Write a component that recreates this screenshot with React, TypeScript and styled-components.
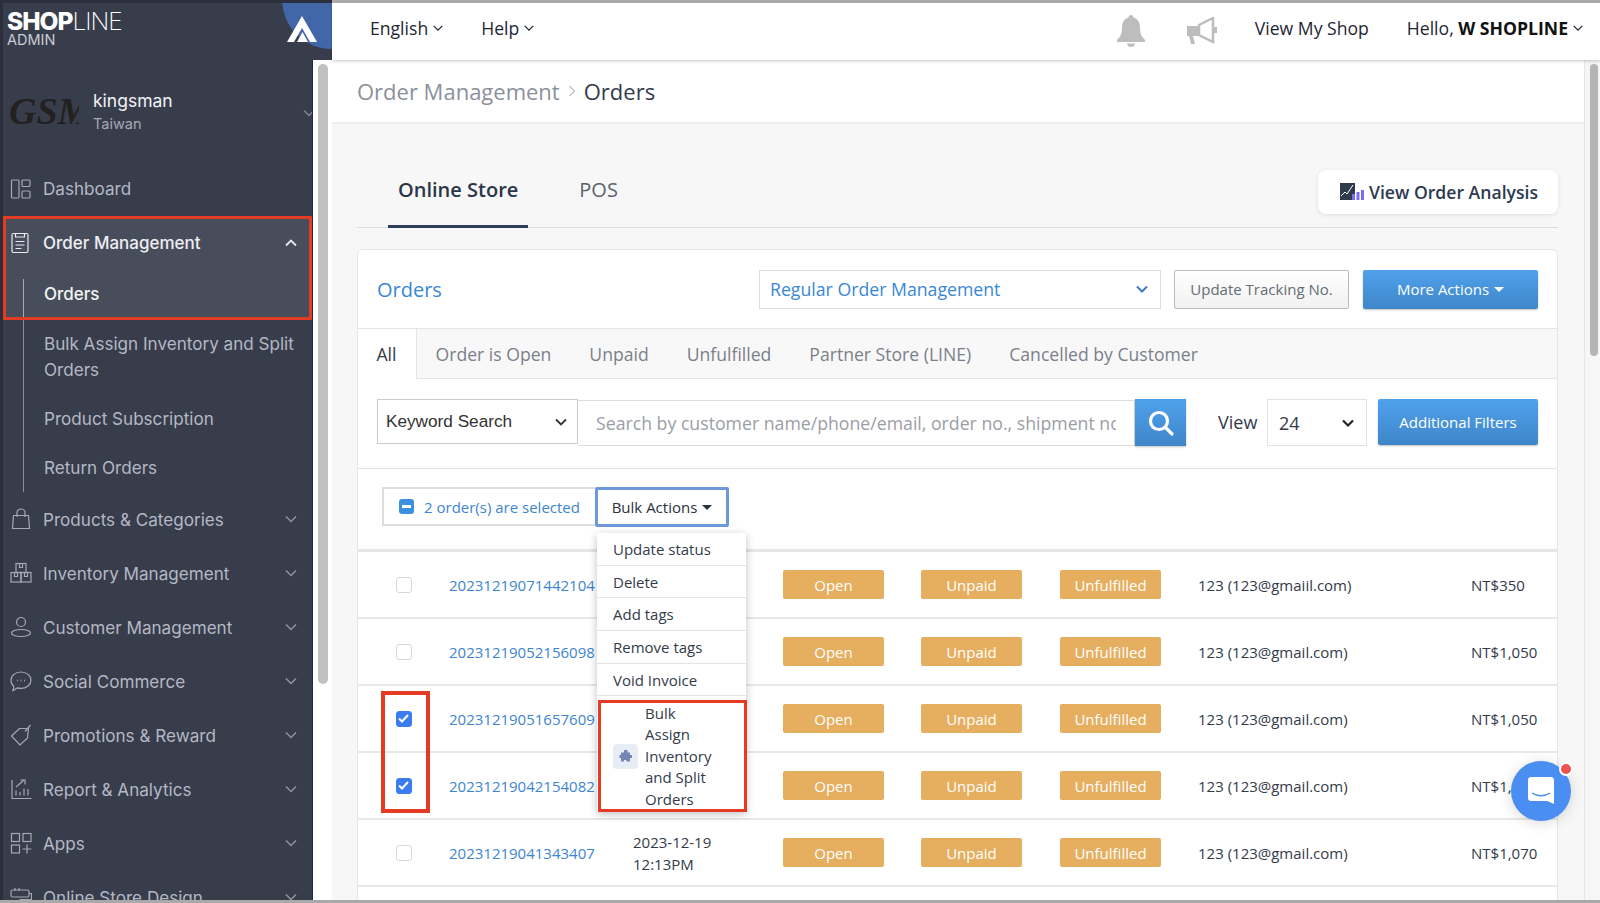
import React from 'react';
import styled, { createGlobalStyle } from 'styled-components';

const GlobalStyle = createGlobalStyle`
  html, body { margin: 0; padding: 0; background: #fff; overflow: hidden; }
  * { box-sizing: border-box; }
  body { font-family: "Open Sans", "Liberation Sans", sans-serif; color: #333b4a; }
`;

const chevronPaths = {
  down: 'M2 4.5l5 5 5-5',
  up: 'M2 9.5 7 4.5l5 5',
  right: 'M4.500 2l5 5-5 5',
};

const Chevron: React.FC<{ dir?: keyof typeof chevronPaths; size?: number; weight?: number }> = ({
  dir = 'down',
  size = 14,
  weight = 1.5,
}) => (
  <svg width={size} height={size} viewBox="0 0 14 14" fill="none" stroke="currentColor" strokeWidth={weight}>
    <path d={chevronPaths[dir]} />
  </svg>
);

const Caret = () => (
  <svg width="10" height="5" viewBox="0 0 10 5" fill="currentColor">
    <path d="M0 0h10L5 5z" />
  </svg>
);

const icon = (body: React.ReactNode) => (
  <svg width="22" height="22" viewBox="0 0 22 22" fill="none" stroke="currentColor" strokeWidth="1.2">
    {body}
  </svg>
);

const icons = {
  dashboard: icon(
    <>
      <rect x="1.5" y="2" width="7.5" height="18" rx="1" />
      <rect x="12" y="2" width="8" height="6.5" rx="1" />
      <rect x="12" y="13" width="8" height="7" rx="1" />
    </>,
  ),
  orders: icon(
    <>
      <rect x="2" y="1.5" width="16" height="19" rx="1.5" />
      <path d="M5.500 1.500v3.500h9V1.500M5.500 9.500h9M5.500 13h9M5.500 16.500h6" />
    </>,
  ),
  bag: icon(
    <>
      <path d="M3.500 7.500h15l1 13h-17z" />
      <path d="M7 9V4.500C7 2.500 9 1 11 1s4 1.500 4 3.500V9" />
    </>,
  ),
  boxes: icon(
    <>
      <rect x="6" y="1.500" width="10" height="9" />
      <rect x="1" y="10.500" width="10" height="9.500" />
      <rect x="11" y="10.500" width="10" height="9.500" />
      <path d="M9.500 1.500v4h3v-4M4.500 10.500v4h3v-4M14.500 10.500v4h3v-4" />
    </>,
  ),
  person: icon(
    <>
      <circle cx="11" cy="6" r="4.500" />
      <ellipse cx="11" cy="17" rx="9.500" ry="3.500" />
    </>,
  ),
  chat: icon(
    <>
      <path d="M11 2c5.500 0 10 3.600 10 8.200s-4.500 8.200-10 8.200c-1.300 0-2.500-.2-3.600-.5L3 20.500l.8-4.200C2 14.800 1 12.600 1 10.200 1 5.600 5.500 2 11 2z" />
      <path d="M7 10.500h1M10.500 10.500h1M14 10.500h1" strokeWidth="1.600" />
    </>,
  ),
  tag: icon(
    <>
      <path d="M1.500 12 9.500 4.500h9l-1 9.500-7.500 7z" />
      <path d="M15 7.500 20.500 1" />
    </>,
  ),
  chart: icon(
    <>
      <path d="M2 2v18.500h19.500" />
      <path d="M6 17.500v-5M10 17.500V14M14 17.500v-7M18 17.500V11" />
      <path d="M6 9l8-7M10.500 2H15v4.500" />
    </>,
  ),
  apps: icon(
    <>
      <rect x="1.500" y="1.500" width="8" height="8" />
      <rect x="13" y="1.500" width="8" height="8" />
      <rect x="1.500" y="13" width="8" height="8" />
      <path d="M17 12.500v9M12.500 17h9" />
    </>,
  ),
  roller: icon(
    <>
      <rect x="1" y="4" width="18" height="7" rx="1.500" />
      <path d="M19 7.500h2.500v6H10v3M5 2v3M9 2v3" />
      <rect x="7" y="16" width="6" height="6" />
    </>,
  ),
};

const navAfter = [
  { label: 'Products & Categories', icon: icons.bag },
  { label: 'Inventory Management', icon: icons.boxes },
  { label: 'Customer Management', icon: icons.person },
  { label: 'Social Commerce', icon: icons.chat },
  { label: 'Promotions & Reward', icon: icons.tag },
  { label: 'Report & Analytics', icon: icons.chart },
  { label: 'Apps', icon: icons.apps },
  { label: 'Online Store Design', icon: icons.roller },
];

const orders = [
  { no: '20231219071442104', email: '123 (123@gmaiil.com)', total: 'NT$350', checked: false },
  { no: '20231219052156098', email: '123 (123@gmail.com)', total: 'NT$1,050', checked: false },
  { no: '20231219051657609', email: '123 (123@gmail.com)', total: 'NT$1,050', checked: true },
  { no: '20231219042154082', email: '123 (123@gmail.com)', total: 'NT$1,050', checked: true },
  { no: '20231219041343407', email: '123 (123@gmail.com)', total: 'NT$1,070', checked: false },
  { no: '20231219035512266', email: '123 (123@gmail.com)', total: 'NT$1,070', checked: false },
];

const App: React.FC = () => (
  <S.Frame>
    <GlobalStyle />
    <S.LeftColumn>
      <S.Brand>
        <S.Logo>
          <S.LogoWord>
            <b>SHOP</b>LINE
          </S.LogoWord>
          <S.LogoSub>ADMIN</S.LogoSub>
        </S.Logo>
        <S.BrandCircle />
        <S.BrandMark width="30" height="26" viewBox="0 0 30 26" fill="#fff">
          <path d="M15 0 30 26h-7L15 12 7 26H0z" />
          <path d="M15.500 16 21 26H10z" />
        </S.BrandMark>
      </S.Brand>
      <S.LeftBody>
        <S.Nav>
          <S.Account>
            <S.StoreLogo>
              <span>GSM</span>
            </S.StoreLogo>
            <S.AccountText>
              <S.StoreName>kingsman</S.StoreName>
              <S.StoreRegion>Taiwan</S.StoreRegion>
            </S.AccountText>
            <S.AccountChevron>
              <Chevron />
            </S.AccountChevron>
          </S.Account>
          <S.DashboardRow>
            <S.NavIcon>{icons.dashboard}</S.NavIcon>
            Dashboard
          </S.DashboardRow>
          <S.ActiveGroup>
            <S.ActiveRow>
              <S.NavIcon>{icons.orders}</S.NavIcon>
              Order Management
              <S.RowChevron>
                <Chevron dir="up" weight={1.8} />
              </S.RowChevron>
            </S.ActiveRow>
            <S.ActiveSub>Orders</S.ActiveSub>
          </S.ActiveGroup>
          <S.SubList>
            <S.SubItem>Bulk Assign Inventory and Split Orders</S.SubItem>
            <S.SubItem>Product Subscription</S.SubItem>
            <S.SubItem>Return Orders</S.SubItem>
          </S.SubList>
          {navAfter.map((item) => (
            <S.NavRow key={item.label}>
              <S.NavIcon>{item.icon}</S.NavIcon>
              {item.label}
              <S.RowChevron>
                <Chevron />
              </S.RowChevron>
            </S.NavRow>
          ))}
        </S.Nav>
        <S.Gutter>
          <S.LeftThumb />
        </S.Gutter>
      </S.LeftBody>
    </S.LeftColumn>

    <S.RightColumn>
      <S.TopBar>
        <S.TopLink>
          English <Chevron size={12} />
        </S.TopLink>
        <S.TopLink>
          Help <Chevron size={12} />
        </S.TopLink>
        <S.TopSpacer />
        <S.BellIcon width="30" height="32" viewBox="0 0 30 32" fill="#bdbdbd">
          <path d="M15 0c1.500 0 2.500 1 2.500 2.500C22.500 4 24 8 24 13c0 6 2 9 5 12 .5.800 0 2-1 2H2c-1 0-1.500-1.200-1-2 3-3 5-6 5-12 0-5 1.500-9 6.500-10.500C12.500 1 13.500 0 15 0z" />
          <path d="M11 28.500h8c0 2-1.800 3.500-4 3.500s-4-1.500-4-3.500z" />
        </S.BellIcon>
        <S.HornIcon width="32" height="28" viewBox="0 0 32 28" fill="#bdbdbd">
          <path d="M1 9h11v10H7l2 8H5l-2-8H1z" />
          <path d="M13 8 27 1v24l-14-7z" fill="none" stroke="#bdbdbd" strokeWidth="2.500" />
          <path d="M28 10h3v6h-3z" />
        </S.HornIcon>
        <S.ShopLink>View My Shop</S.ShopLink>
        <S.TopLink>
          <span>
            Hello, <b>W SHOPLINE</b>
          </span>
          <Chevron size={12} />
        </S.TopLink>
      </S.TopBar>
      <S.RightBody>
        <S.Page>
          <S.Breadcrumb>
            <span>Order Management</span>
            <S.CrumbArrow>
              <Chevron dir="right" size={14} weight={1} />
            </S.CrumbArrow>
            <S.CrumbCurrent>Orders</S.CrumbCurrent>
          </S.Breadcrumb>
          <S.Content>
            <S.StoreTabs>
              <S.StoreTab $active>Online Store</S.StoreTab>
              <S.StoreTab>POS</S.StoreTab>
              <S.AnalysisButton>
                <svg width="24" height="18" viewBox="0 0 24 18">
                  <rect x="0" y="0" width="15" height="17" fill="#2f3b4a" />
                  <path d="M1 13l4-4 2 2 6-9" fill="none" stroke="#fff" strokeWidth="1" />
                  <path d="M12 11h3v6h-3zM16.500 9h3v8h-3zM21 7h3v10h-3z" fill="#7b6cf6" />
                </svg>
                View Order Analysis
              </S.AnalysisButton>
            </S.StoreTabs>

            <S.Card>
              <S.CardHeader>
                <S.CardTitle>Orders</S.CardTitle>
                <S.ModeSelect>
                  Regular Order Management
                  <Chevron size={14} weight={2} />
                </S.ModeSelect>
                <S.GhostButton>Update Tracking No.</S.GhostButton>
                <S.BlueButton $width={175}>
                  More Actions <Caret />
                </S.BlueButton>
              </S.CardHeader>

              <S.FilterTabs>
                <S.FilterTab $active>All</S.FilterTab>
                <S.FilterTab>Order is Open</S.FilterTab>
                <S.FilterTab>Unpaid</S.FilterTab>
                <S.FilterTab>Unfulfilled</S.FilterTab>
                <S.FilterTab>Partner Store (LINE)</S.FilterTab>
                <S.FilterTab>Cancelled by Customer</S.FilterTab>
              </S.FilterTabs>

              <S.SearchRow>
                <S.KeywordSelect>
                  Keyword Search
                  <Chevron size={14} weight={1.8} />
                </S.KeywordSelect>
                <S.SearchInput>
                  <S.Placeholder>Search by customer name/phone/email, order no., shipment no.</S.Placeholder>
                </S.SearchInput>
                <S.SearchButton>
                  <svg width="28" height="28" viewBox="0 0 28 28" fill="none" stroke="#fff" strokeWidth="3.200">
                    <circle cx="12" cy="12" r="8.500" />
                    <path d="M18.500 18.500 25 25" strokeLinecap="round" />
                  </svg>
                </S.SearchButton>
                <S.ViewLabel>View</S.ViewLabel>
                <S.ViewSelect>
                  24
                  <Chevron size={14} weight={2.2} />
                </S.ViewSelect>
                <S.BlueButton $width={160} $height={46}>
                  Additional Filters
                </S.BlueButton>
              </S.SearchRow>

              <S.BulkRow>
                <S.SelectedBox>
                  <S.MinusBox />
                  2 order(s) are selected
                </S.SelectedBox>
                <S.BulkButton>
                  Bulk Actions <Caret />
                </S.BulkButton>
                <S.Menu>
                  <S.MenuItem>Update status</S.MenuItem>
                  <S.MenuItem>Delete</S.MenuItem>
                  <S.MenuItem>Add tags</S.MenuItem>
                  <S.MenuItem>Remove tags</S.MenuItem>
                  <S.MenuItem>Void Invoice</S.MenuItem>
                  <S.MenuApp>
                    <S.AppIcon>
                      <svg width="14" height="14" viewBox="0 0 14 14" fill="#7487b4">
                        <path d="M5 1h3.500v2.500H11V6h2v3h-2v3.500H7.500V11H5v1.500H2V9H.5V6H2V3.500h3z" />
                      </svg>
                    </S.AppIcon>
                    <S.AppText>Bulk Assign Inventory and Split Orders</S.AppText>
                  </S.MenuApp>
                </S.Menu>
              </S.BulkRow>

              <S.Table>
                {orders.map((order) => (
                  <S.Row key={order.no}>
                    <S.CheckCell>
                      <S.Check $checked={order.checked}>
                        {order.checked && (
                          <svg width="11" height="9" viewBox="0 0 11 9" fill="none" stroke="#fff" strokeWidth="2">
                            <path d="M1 4.500 4 7.500 10 1" />
                          </svg>
                        )}
                      </S.Check>
                    </S.CheckCell>
                    <S.OrderNo>{order.no}</S.OrderNo>
                    <S.DateCell>
                      2023-12-19
                      <br />
                      12:13PM
                    </S.DateCell>
                    <S.Badge>Open</S.Badge>
                    <S.Badge>Unpaid</S.Badge>
                    <S.Badge>Unfulfilled</S.Badge>
                    <S.Customer>{order.email}</S.Customer>
                    <span>{order.total}</span>
                  </S.Row>
                ))}
                <S.CheckHighlight />
              </S.Table>
            </S.Card>
          </S.Content>
        </S.Page>
        <S.RightGutter>
          <S.RightThumb />
        </S.RightGutter>
      </S.RightBody>
    </S.RightColumn>

    <S.ChatBubble>
      <svg width="28" height="30" viewBox="0 0 28 30">
        <path d="M4 1h20c1.700 0 3 1.300 3 3v24l-7-3H4c-1.700 0-3-1.300-3-3V4c0-1.700 1.300-3 3-3z" fill="#fff" />
        <path d="M5 17c5 3.500 13 3.500 18 0" fill="none" stroke="#4b8ef1" strokeWidth="1.500" />
      </svg>
      <S.ChatDot />
    </S.ChatBubble>
  </S.Frame>
);

export default App;

const S = {
  Frame: styled.div`
    position: relative;
    display: flex;
    width: 1600px;
    height: 903px;
    overflow: hidden;
    border-bottom: 3px solid #a9a9a9;
  `,

  LeftColumn: styled.div`
    display: flex;
    flex-direction: column;
    flex: 0 0 332px;
    height: 100%;
  `,

  Brand: styled.div`
    position: relative;
    flex: 0 0 60px;
    overflow: hidden;
    background: #383d4c;
    border-top: 3px solid #2b2f3b;
    border-left: 3px solid #2b2f3b;
  `,

  Logo: styled.div`
    padding: 6px 0 0 4px;
    color: #fff;
  `,

  LogoWord: styled.div`
    font-family: 'Inter', sans-serif;
    font-size: 24.500px;
    font-weight: 200;
    line-height: 24px;
    letter-spacing: -1px;
    b {
      font-weight: 800;
    }
  `,

  LogoSub: styled.div`
    font-family: 'Inter', sans-serif;
    font-size: 14.500px;
    line-height: 14px;
    color: #c9ccd4;
  `,

  BrandCircle: styled.div`
    position: absolute;
    left: 279px;
    top: -54px;
    width: 100px;
    height: 100px;
    border-radius: 50%;
    background: #4267a9;
  `,

  BrandMark: styled.svg`
    position: absolute;
    left: 284px;
    top: 13px;
  `,

  LeftBody: styled.div`
    display: flex;
    flex: 1;
    min-height: 0;
  `,

  Nav: styled.nav`
    flex: 0 0 313px;
    overflow: hidden;
    background: #383d4c;
    border-left: 3px solid #2b2f3b;
    border-right: 1px solid #1f2a44;
    font-family: 'Inter', 'Liberation Sans', sans-serif;
    font-size: 17.100px;
    color: #b4b8c4;
  `,

  Account: styled.div`
    position: relative;
    display: flex;
    align-items: center;
    height: 101px;
    padding: 0 0 0 6px;
  `,

  StoreLogo: styled.div`
    width: 70px;
    height: 34px;
    overflow: hidden;
    font-family: 'Liberation Serif', serif;
    font-style: italic;
    font-weight: 700;
    font-size: 38px;
    line-height: 34px;
    white-space: nowrap;
    color: #22211f;
  `,

  AccountText: styled.div`
    margin-left: 14px;
    padding-top: 2px;
  `,

  StoreName: styled.div`
    font-size: 17.500px;
    line-height: 24px;
    color: #f2f3f5;
  `,

  StoreRegion: styled.div`
    font-size: 14.500px;
    line-height: 22px;
    color: #a4a8b4;
  `,

  AccountChevron: styled.span`
    position: absolute;
    right: -4px;
    top: 43px;
    color: #7e8390;
  `,

  NavRow: styled.div`
    display: flex;
    align-items: center;
    height: 54px;
    padding: 0 14px 0 7px;
    white-space: nowrap;
  `,

  DashboardRow: styled.div`
    display: flex;
    align-items: center;
    height: 55px;
    padding: 0 14px 0 7px;
    white-space: nowrap;
  `,

  NavIcon: styled.span`
    display: flex;
    width: 22px;
    margin-right: 11px;
    color: #a5a9b5;
  `,

  RowChevron: styled.span`
    display: flex;
    margin-left: auto;
    color: #8f94a1;
  `,

  ActiveGroup: styled.div`
    height: 104px;
    background: #484d5b;
    border: 3px solid #e43c24;
    color: #edeef2;
    font-size: 17px;
    font-weight: 500;
  `,

  ActiveRow: styled.div`
    display: flex;
    align-items: center;
    height: 47px;
    padding: 0 11px 0 4px;
    white-space: nowrap;
    span {
      color: #e8e9ee;
    }
  `,

  ActiveSub: styled.div`
    height: 38px;
    margin: 13px 0 0 17px;
    padding: 3px 0 0 20px;
    line-height: 24px;
    border-left: 1px solid #a6a9b3;
    color: #f2f3f5;
  `,

  SubList: styled.div`
    height: 172px;
    margin-left: 20px;
    padding-top: 11px;
    border-left: 1px solid #8a8e9a;
  `,

  SubItem: styled.div`
    width: 268px;
    margin: 0 0 23px 20px;
    line-height: 26px;
  `,

  Gutter: styled.div`
    flex: 1;
    padding: 4px 4px 0 5px;
    background: #fff;
  `,

  LeftThumb: styled.div`
    height: 620px;
    border-radius: 5px;
    background: #c1c1c1;
  `,

  RightColumn: styled.div`
    display: flex;
    flex-direction: column;
    flex: 1;
    min-width: 0;
    height: 100%;
  `,

  TopBar: styled.header`
    position: relative;
    z-index: 2;
    display: flex;
    flex: 0 0 60px;
    align-items: center;
    padding: 0 16px 8px 38px;
    background: #fff;
    border-top: 3px solid #a9a9a9;
    box-shadow: 0 1px 3px rgba(0, 0, 0, 0.22);
    font-size: 17.600px;
    color: #1f2633;
  `,

  TopLink: styled.div`
    display: flex;
    align-items: center;
    gap: 4px;
    margin-right: 37px;
    white-space: nowrap;
    &:last-child {
      margin-right: 0;
    }
    b {
      font-weight: 700;
      color: #111;
    }
  `,

  TopSpacer: styled.div`
    flex: 1;
  `,

  BellIcon: styled.svg`
    margin: 6px 40px 0 0;
  `,

  HornIcon: styled.svg`
    margin: 6px 37px 0 0;
  `,

  ShopLink: styled.div`
    margin-right: 38px;
  `,

  RightBody: styled.div`
    display: flex;
    flex: 1;
    min-height: 0;
  `,

  Page: styled.main`
    flex: 1;
    min-width: 0;
    overflow: hidden;
    background: #f7f7f7;
  `,

  Breadcrumb: styled.div`
    display: flex;
    align-items: center;
    height: 64px;
    padding-left: 25px;
    background: #fff;
    border-bottom: 2px solid #eee;
    font-size: 22px;
    color: #8b909a;
  `,

  CrumbArrow: styled.span`
    display: flex;
    margin: 0 5px 0 5px;
  `,

  CrumbCurrent: styled.span`
    color: #333b4a;
  `,

  Content: styled.div`
    padding: 0 26px 0 25px;
  `,

  StoreTabs: styled.div`
    display: flex;
    align-items: flex-end;
    height: 104px;
    border-bottom: 1px solid #ddd;
  `,

  StoreTab: styled.div<{ $active?: boolean }>`
    display: flex;
    align-items: center;
    justify-content: center;
    height: 60px;
    margin: 0 ${(p) => (p.$active ? '41px' : '0')} -1px ${(p) => (p.$active ? '31px' : '0')};
    padding: 0 10px 14px;
    border-bottom: 3px solid ${(p) => (p.$active ? '#2f3e5a' : 'transparent')};
    font-size: 20px;
    font-weight: ${(p) => (p.$active ? 600 : 400)};
    color: ${(p) => (p.$active ? '#2b3648' : '#5c6370')};
  `,

  AnalysisButton: styled.div`
    display: flex;
    align-items: center;
    gap: 5px;
    height: 44px;
    margin: 0 0 13px auto;
    padding: 0 20px 0 22px;
    border-radius: 8px;
    background: #fff;
    box-shadow: 0 1px 4px rgba(0, 0, 0, 0.1);
    font-size: 17.600px;
    font-weight: 600;
    color: #2d3a50;
  `,

  Card: styled.section`
    margin-top: 21px;
    background: #fff;
    border: 1px solid #e6e6e6;
    border-radius: 6px 6px 0 0;
  `,

  CardHeader: styled.div`
    display: flex;
    align-items: center;
    height: 78px;
    padding: 0 19px;
  `,

  CardTitle: styled.div`
    font-size: 20px;
    color: #3a87d5;
  `,

  ModeSelect: styled.div`
    display: flex;
    align-items: center;
    justify-content: space-between;
    width: 402px;
    height: 39px;
    margin-left: auto;
    padding: 0 11px 0 10px;
    border: 1px solid #ddd;
    font-size: 17.700px;
    color: #3a87d5;
    svg {
      color: #3f77c4;
    }
  `,

  GhostButton: styled.div`
    display: flex;
    align-items: center;
    justify-content: center;
    width: 175px;
    height: 39px;
    margin: 0 14px 0 13px;
    border: 1px solid #bbb;
    border-radius: 2px;
    background: linear-gradient(#fff, #f1f1f1);
    font-size: 15px;
    color: #666c75;
  `,

  BlueButton: styled.div<{ $width: number; $height?: number }>`
    display: flex;
    align-items: center;
    justify-content: center;
    gap: 5px;
    flex: 0 0 ${(p) => p.$width}px;
    height: ${(p) => p.$height ?? 39}px;
    border-radius: 2px;
    background: linear-gradient(#4fa1ec, #3f86c9);
    box-shadow: 0 1px 2px rgba(0, 0, 0, 0.25);
    font-size: 15px;
    color: #fff;
  `,

  FilterTabs: styled.div`
    display: flex;
    height: 51px;
    background: #f8f8f8;
    border-top: 1px solid #e5e5e5;
    border-bottom: 1px solid #e5e5e5;
  `,

  FilterTab: styled.div<{ $active?: boolean }>`
    display: flex;
    align-items: center;
    height: ${(p) => (p.$active ? '50px' : '49px')};
    padding: 0 19px 0 ${(p) => (p.$active ? '18.500px' : '19px')};
    background: ${(p) => (p.$active ? '#fff' : 'transparent')};
    border-right: ${(p) => (p.$active ? '1px solid #e5e5e5' : '0')};
    font-size: 17.600px;
    color: ${(p) => (p.$active ? '#333b4a' : '#7b808a')};
  `,

  SearchRow: styled.div`
    display: flex;
    align-items: flex-start;
    height: 90px;
    padding: 20px 19px 0 19px;
    border-bottom: 1px solid #e3e3e3;
  `,

  KeywordSelect: styled.div`
    display: flex;
    align-items: center;
    justify-content: space-between;
    flex: 0 0 201px;
    height: 45px;
    padding: 0 9px 0 8px;
    border: 1px solid #ccc;
    font-family: 'Liberation Sans', sans-serif;
    font-size: 17.200px;
    color: #333;
  `,

  SearchInput: styled.div`
    display: flex;
    align-items: center;
    flex: 0 0 557px;
    min-width: 0;
    height: 46px;
    margin-top: 1px;
    padding: 0 18px;
    border: 1px solid #ddd;
    border-left: 0;
    font-size: 17.700px;
    color: #9a9ea6;
  `,

  Placeholder: styled.span`
    min-width: 0;
    overflow: hidden;
    white-space: nowrap;
  `,

  SearchButton: styled.div`
    display: flex;
    align-items: center;
    justify-content: center;
    flex: 0 0 51px;
    height: 47px;
    background: linear-gradient(#4fa1ec, #3f86c9);
    box-shadow: 0 1px 2px rgba(0, 0, 0, 0.25);
  `,

  ViewLabel: styled.div`
    flex: 0 0 49px;
    margin-left: 32px;
    line-height: 47px;
    font-size: 18px;
  `,

  ViewSelect: styled.div`
    display: flex;
    align-items: center;
    justify-content: space-between;
    flex: 0 0 100px;
    height: 47px;
    margin-right: 11px;
    padding: 0 11px;
    border: 1px solid #e2e2e2;
    font-size: 18px;
    svg {
      color: #222;
    }
  `,

  BulkRow: styled.div`
    position: relative;
    display: flex;
    height: 83px;
    padding: 18px 0 0 24px;
    border-bottom: 3px solid #e6e6e6;
  `,

  SelectedBox: styled.div`
    display: flex;
    align-items: center;
    width: 213px;
    height: 39px;
    padding-left: 15px;
    border: 2px solid #ddd;
    border-right: 0;
    font-size: 15px;
    color: #3d85cf;
  `,

  MinusBox: styled.span`
    position: relative;
    width: 15px;
    height: 15px;
    margin-right: 10px;
    border-radius: 3px;
    background: #3d8fe0;
    &::after {
      content: '';
      position: absolute;
      left: 3px;
      right: 3px;
      top: 6px;
      height: 3px;
      background: #fff;
    }
  `,

  BulkButton: styled.div`
    display: flex;
    align-items: center;
    justify-content: center;
    gap: 5px;
    width: 134px;
    height: 40px;
    border: 3px solid #6e98dc;
    border-radius: 2px;
    font-size: 15px;
    color: #2a3140;
  `,

  Menu: styled.div`
    position: absolute;
    z-index: 3;
    left: 239px;
    top: 64px;
    width: 149px;
    background: #fff;
    box-shadow: 0 2px 8px rgba(0, 0, 0, 0.25);
    font-size: 15px;
    color: #333b4a;
  `,

  MenuItem: styled.div`
    display: flex;
    align-items: center;
    height: 32.700px;
    padding-left: 16px;
    border-bottom: 1px solid #e4e4e4;
  `,

  MenuApp: styled.div`
    display: flex;
    align-items: center;
    height: 112px;
    margin: 4px -1px 0 1px;
    padding-left: 12px;
    border: 3px solid #e43c24;
    line-height: 21.400px;
  `,

  AppIcon: styled.span`
    display: flex;
    align-items: center;
    justify-content: center;
    flex: 0 0 25px;
    height: 25px;
    margin-right: 7px;
    border-radius: 4px;
    background: #e8ecf5;
  `,

  AppText: styled.span`
    width: 76px;
  `,

  Table: styled.div`
    position: relative;
  `,

  Row: styled.div`
    display: grid;
    grid-template-columns: 91px 184px 150px 138px 139px 138px 273px 1fr;
    align-items: center;
    height: 67px;
    border-bottom: 2px solid #e8e8e8;
    font-size: 15px;
    color: #333b4a;
  `,

  CheckCell: styled.div`
    display: flex;
    justify-content: center;
  `,

  Check: styled.span<{ $checked: boolean }>`
    display: flex;
    align-items: center;
    justify-content: center;
    width: 16px;
    height: 16px;
    border: 1px solid ${(p) => (p.$checked ? '#3b7cf0' : '#d8d8d8')};
    border-radius: 3px;
    background: ${(p) => (p.$checked ? '#3b7cf0' : '#fff')};
  `,

  OrderNo: styled.span`
    color: #3d85cf;
  `,

  DateCell: styled.span`
    line-height: 22px;
  `,

  Badge: styled.span`
    display: flex;
    align-items: center;
    justify-content: center;
    width: 101px;
    height: 29px;
    border-radius: 2px;
    background: #e6ae5f;
    color: #fff;
  `,

  Customer: styled.span`
    white-space: nowrap;
  `,

  CheckHighlight: styled.div`
    position: absolute;
    left: 23px;
    top: 139px;
    width: 49px;
    height: 122px;
    border: 4px solid #e43c24;
    pointer-events: none;
  `,

  RightGutter: styled.div`
    flex: 0 0 16px;
    padding: 4px 2px 0 5px;
    background: #f6f6f6;
    border-left: 1px solid #e6e6e6;
  `,

  RightThumb: styled.div`
    height: 292px;
    border-radius: 5px;
    background: #b5b5b5;
  `,

  ChatBubble: styled.div`
    position: absolute;
    z-index: 5;
    left: 1511px;
    top: 761px;
    display: flex;
    align-items: center;
    justify-content: center;
    width: 60px;
    height: 60px;
    border-radius: 50%;
    background: #4b8ef1;
    box-shadow: 0 2px 14px rgba(0, 0, 0, 0.15);
  `,

  ChatDot: styled.span`
    position: absolute;
    right: -2px;
    top: 1px;
    width: 14px;
    height: 14px;
    border: 2px solid #fff;
    border-radius: 50%;
    background: #ec5350;
  `,
};
